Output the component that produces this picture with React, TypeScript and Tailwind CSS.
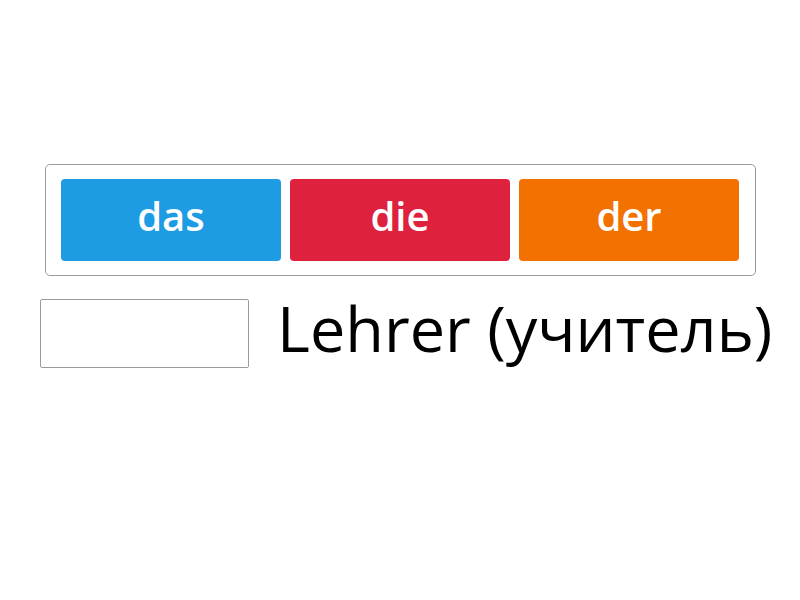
const choices = [
  { label: 'das', color: 'bg-[#1d9be3]' },
  { label: 'die', color: 'bg-[#de213c]' },
  { label: 'der', color: 'bg-[#f27100]' },
]

export default function App() {
  return (
    <div className="h-[600px] w-[800px] bg-white font-['Open_Sans',sans-serif]">
      <div className="pt-[164px] pl-[45px]">
        <div className="flex w-[711px] gap-[9px] rounded-[5px] border border-[#9b9b9b] px-[15px] py-[14px]">
          {choices.map((c) => (
            <div
              key={c.label}
              className={`flex h-[82px] w-[220px] items-center justify-center rounded-[4px] pb-[8px] ${c.color} text-[40px] font-semibold text-white`}
            >
              {c.label}
            </div>
          ))}
        </div>
      </div>
      <div className="mt-[23px] flex items-center pl-[40px]">
        <div className="h-[69px] w-[209px] rounded-[2px] border border-[#9b9b9b] bg-white" />
        <div className="ml-[28px] -mt-[13px] text-[63px] leading-none text-black">Lehrer (учитель)</div>
      </div>
    </div>
  )
}
